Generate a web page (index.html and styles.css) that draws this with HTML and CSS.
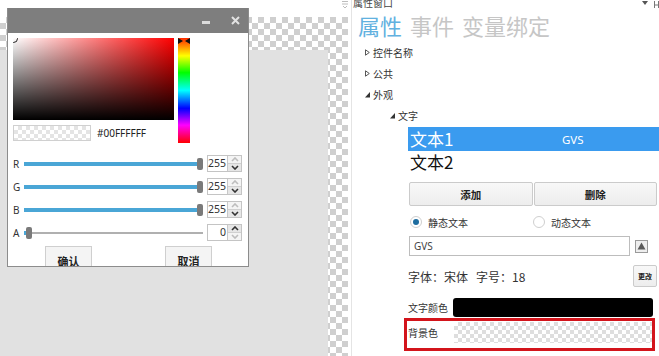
FILE: index.html
```html
<!DOCTYPE html>
<html>
<head>
<meta charset="utf-8">
<link rel="stylesheet" href="styles.css">
</head>
<body>
<div class="canvas">
  <div class="canvas-top"></div>
  <div class="checker"><div class="stage"></div></div>
</div>

<div class="dialog">
  <div class="titlebar">
    <svg class="tb-min" width="8" height="4" viewBox="0 0 8 4"><rect x="0" y="0" width="8" height="3" fill="#dcdcdc"/></svg>
    <svg class="tb-close" width="9" height="9" viewBox="0 0 9 9"><path d="M1 1 L8 8 M8 1 L1 8" stroke="#e2e2e2" stroke-width="2"/></svg>
  </div>
  <div class="dbody">
    <div class="picker">
      <div class="picker-left">
        <div class="sv"><span class="sv-marker"></span></div>
        <div class="preview-row">
          <div class="swatch"></div>
          <span class="hex">#00FFFFFF</span>
        </div>
      </div>
      <div class="hue">
        <svg class="hue-marker" width="12" height="6" viewBox="0 0 12 6"><path d="M0 0 L5 3 L0 6 Z M12 0 L7 3 L12 6 Z" fill="#111"/></svg>
      </div>
    </div>

    <div class="sliders">
      <div class="srow">
        <span class="slabel">R</span>
        <div class="track"><span class="fill"></span><span class="thumb"></span></div>
        <div class="spin"><span class="sval">255</span><span class="arrows"><span class="arr up off"><svg width="8" height="5" viewBox="0 0 8 5"><path d="M1 4 L4 1 L7 4" fill="none" stroke="currentColor" stroke-width="1.6"/></svg></span><span class="arr down"><svg width="8" height="5" viewBox="0 0 8 5"><path d="M1 1 L4 4 L7 1" fill="none" stroke="currentColor" stroke-width="1.6"/></svg></span></span></div>
      </div>
      <div class="srow">
        <span class="slabel">G</span>
        <div class="track"><span class="fill"></span><span class="thumb"></span></div>
        <div class="spin"><span class="sval">255</span><span class="arrows"><span class="arr up off"><svg width="8" height="5" viewBox="0 0 8 5"><path d="M1 4 L4 1 L7 4" fill="none" stroke="currentColor" stroke-width="1.6"/></svg></span><span class="arr down"><svg width="8" height="5" viewBox="0 0 8 5"><path d="M1 1 L4 4 L7 1" fill="none" stroke="currentColor" stroke-width="1.6"/></svg></span></span></div>
      </div>
      <div class="srow">
        <span class="slabel">B</span>
        <div class="track"><span class="fill"></span><span class="thumb"></span></div>
        <div class="spin"><span class="sval">255</span><span class="arrows"><span class="arr up off"><svg width="8" height="5" viewBox="0 0 8 5"><path d="M1 4 L4 1 L7 4" fill="none" stroke="currentColor" stroke-width="1.6"/></svg></span><span class="arr down"><svg width="8" height="5" viewBox="0 0 8 5"><path d="M1 1 L4 4 L7 1" fill="none" stroke="currentColor" stroke-width="1.6"/></svg></span></span></div>
      </div>
      <div class="srow">
        <span class="slabel">A</span>
        <div class="track alpha"><span class="fill"></span><span class="thumb"></span><span class="rest"></span></div>
        <div class="spin"><span class="sval">0</span><span class="arrows"><span class="arr up"><svg width="8" height="5" viewBox="0 0 8 5"><path d="M1 4 L4 1 L7 4" fill="none" stroke="currentColor" stroke-width="1.6"/></svg></span><span class="arr down off"><svg width="8" height="5" viewBox="0 0 8 5"><path d="M1 1 L4 4 L7 1" fill="none" stroke="currentColor" stroke-width="1.6"/></svg></span></span></div>
      </div>
    </div>

    <div class="dbuttons">
      <button class="dbtn">确认</button>
      <button class="dbtn">取消</button>
    </div>
  </div>
</div>

<div class="panel">
  <div class="hdr">
    <svg class="hdr-grip" width="6" height="8" viewBox="0 0 6 8"><path d="M0 1.5 H6 M0 4 H6 M1 6 L3 8 L5 6" stroke="#bdbdbd" stroke-width="1" fill="none"/></svg>
    <span class="hdr-title">属性窗口</span>
    <span class="hdr-right">
      <svg width="6" height="4" viewBox="0 0 6 4"><path d="M0 0 H6 L3 4 Z" fill="#555"/></svg>
      <svg width="5" height="8" viewBox="0 0 5 8"><path d="M0.5 0 V7 M4.5 0 V7 M0.5 4 H4.5" stroke="#777" stroke-width="1" fill="none"/></svg>
    </span>
  </div>

  <div class="tabs">
    <span class="tab active">属性</span>
    <span class="tab">事件</span>
    <span class="tab">变量绑定</span>
  </div>

  <div class="tree">
    <div class="trow lvl1"><svg class="tri" width="5" height="7" viewBox="0 0 5 7"><path d="M0.5 0.8 L4.3 3.5 L0.5 6.2 Z" fill="none" stroke="#444" stroke-width="0.9"/></svg><span>控件名称</span></div>
    <div class="trow lvl1"><svg class="tri" width="5" height="7" viewBox="0 0 5 7"><path d="M0.5 0.8 L4.3 3.5 L0.5 6.2 Z" fill="none" stroke="#444" stroke-width="0.9"/></svg><span>公共</span></div>
    <div class="trow lvl1"><svg class="tri" width="5" height="6" viewBox="0 0 5 6"><path d="M5 0 V5.5 H0 Z" fill="#333"/></svg><span>外观</span></div>
    <div class="trow lvl2"><svg class="tri" width="5" height="6" viewBox="0 0 5 6"><path d="M5 0 V5.5 H0 Z" fill="#333"/></svg><span>文字</span></div>
  </div>

  <div class="section">
    <div class="tlist">
      <div class="titem sel"><span class="tname">文本1</span><span class="tval">GVS</span></div>
      <div class="titem"><span class="tname">文本2</span></div>
    </div>

    <div class="btnrow">
      <button class="pbtn wide">添加</button>
      <button class="pbtn wide">删除</button>
    </div>

    <div class="radiorow">
      <label class="radio on"><span class="rdot"></span>静态文本</label>
      <label class="radio"><span class="rdot"></span>动态文本</label>
    </div>

    <div class="inputrow">
      <div class="tinput">GVS</div>
      <span class="upbtn"><svg width="9" height="8" viewBox="0 0 9 8"><path d="M4.5 0.5 L8.5 7.5 H0.5 Z" fill="#5a5a5a"/></svg></span>
    </div>

    <div class="fontrow">
      <span class="fontinfo">字体：宋体&nbsp;&nbsp;&nbsp;字号：18</span>
      <button class="pbtn small">更改</button>
    </div>

    <div class="colorrow">
      <span class="clabel">文字颜色</span>
      <span class="cbar black"></span>
    </div>

    <div class="colorrow bg-row">
      <span class="clabel">背景色</span>
      <span class="cbar checkbar"></span>
    </div>
  </div>
</div>
</body>
</html>
```

FILE: styles.css
```css
* { box-sizing: border-box; }

body {
  margin: 0;
  width: 659px;
  height: 356px;
  overflow: hidden;
  display: flex;
  background: #fff;
  position: relative;
  font-family: "Noto Sans", "Noto Sans CJK SC", sans-serif;
  color: #222;
}

/* ---------- canvas ---------- */
.canvas {
  width: 348px;
  flex: none;
  display: flex;
  flex-direction: column;
}
.canvas-top { height: 17px; }
.checker {
  flex: 1;
  padding: 33px 20px 0 0;
  background: repeating-conic-gradient(#cfcfcf 0 25%, #fff 0 50%) 0 0 / 12px 12px;
}
.stage { height: 100%; background: #e1e1e1; }

/* ---------- colour dialog ---------- */
.dialog {
  position: absolute;
  left: 7px;
  top: 8px;
  width: 242px;
  height: 259px;
  background: #fff;
  border: 1px solid #8c8c8c;
  border-top: none;
  overflow: hidden;
  display: flex;
  flex-direction: column;
}
.titlebar {
  height: 25px;
  flex: none;
  margin: 0 -1px;
  background: #7e7e7e;
  display: flex;
  align-items: center;
  justify-content: flex-end;
  padding-right: 9px;
  gap: 21px;
}
.tb-min { margin-top: 4px; }

.dbody { padding: 5px 6px 0 5px; }

.picker { display: flex; gap: 4px; }
.picker-left { width: 161px; display: flex; flex-direction: column; }
.sv {
  height: 82px;
  position: relative;
  overflow: hidden;
  background: linear-gradient(to bottom, rgba(0,0,0,0), #000), linear-gradient(to right, #fff, #f00);
}
.sv-marker {
  position: absolute;
  left: -4px;
  top: -4px;
  width: 9px;
  height: 9px;
  border: 1px solid #222;
  border-radius: 50%;
}
.preview-row { display: flex; align-items: center; margin-top: 5px; height: 16px; }
.swatch {
  width: 78px;
  height: 16px;
  border: 1px solid #d0d0d0;
  background: repeating-conic-gradient(#e4e4e4 0 25%, #fff 0 50%) 0 0 / 8px 8px;
}
.hex { margin-left: 6px; font-size: 10px; color: #222; }
.hue {
  width: 12px;
  height: 105px;
  position: relative;
  background: linear-gradient(to bottom, #ff2a00 0%, #ffff00 17%, #00ff00 33%, #00ffff 50%, #0000ff 67%, #ff00ff 83%, #ff0000 100%);
}
.hue-marker { position: absolute; left: 0; top: 0; }

.sliders { margin-top: 9px; }
.srow {
  height: 23px;
  display: grid;
  grid-template-columns: 11px 183px 1fr;
  align-items: center;
}
.slabel { font-size: 10px; color: #333; }
.track { display: flex; align-items: center; height: 12px; margin-right: 4px; }
.track .fill { flex: 1; height: 4px; background: #4aa6d6; }
.track .thumb { width: 6px; height: 12px; background: #7a7a7a; border-radius: 2px; flex: none; }
.track.alpha .fill { flex: none; width: 2px; }
.track.alpha .rest { flex: 1; height: 2px; background: #b0b0b0; }

.spin {
  height: 17px;
  border: 1px solid #c4c4c4;
  display: flex;
  background: #fff;
}
.sval { flex: 1; text-align: right; font-size: 10.5px; line-height: 15px; color: #333; padding-right: 1px; }
.arrows { width: 14px; display: flex; flex-direction: column; border-left: 1px solid #c8c8c8; }
.arr { flex: 1; display: flex; align-items: center; justify-content: center; background: #e6e6e6; color: #333; }
.arr.off { background: #f4f4f4; color: #bdbdbd; }
.arr.up { border-bottom: 1px solid #d0d0d0; }

.dbuttons { display: flex; gap: 73px; padding-left: 32px; margin-top: 2px; }
.dbtn {
  width: 47px;
  height: 29px;
  border: 1px solid #cfcfcf;
  background: #f4f4f4;
  font-family: "Noto Sans CJK SC", sans-serif;
  font-size: 11px;
  font-weight: 700;
  color: #222;
  padding: 0;
}

/* ---------- property panel ---------- */
.panel {
  flex: 1;
  margin-left: 3px;
  border-left: 1px solid #e4e4e4;
  display: flex;
  flex-direction: column;
  font-family: "Noto Sans CJK SC", sans-serif;
  min-width: 0;
}
.hdr {
  height: 9px;
  display: flex;
  align-items: flex-start;
  font-size: 10px;
  line-height: 10px;
  color: #444;
}
.hdr-grip { margin-left: -10px; margin-top: 0; flex: none; }
.hdr-title { margin-left: 5px; margin-top: -2px; }
.hdr-right { margin-left: auto; display: flex; gap: 6px; margin-top: 1px; }

.tabs {
  margin-top: 3px;
  height: 26px;
  line-height: 26px;
  font-size: 22px;
  padding-left: 6px;
  display: flex;
  gap: 8px;
}
.tab { color: #c6c6c6; }
.tab.active { color: #62b1df; }

.tree { margin-top: 4px; }
.trow {
  height: 21px;
  display: flex;
  align-items: center;
  font-size: 10px;
  color: #333;
}
.trow .tri { margin-right: 3px; flex: none; }
.trow.lvl1 { padding-left: 13px; }
.trow.lvl2 { padding-left: 38px; }

.section { padding-left: 56px; display: flex; flex-direction: column; }

.tlist { margin-top: 1px; }
.titem {
  height: 22px;
  display: flex;
  align-items: center;
  padding-left: 2px;
}
.titem.sel { height: 24px; background: #3a9bef; color: #fff; }
.tname { width: 152px; font-size: 17px; line-height: 20px; }
.titem:not(.sel) .tname { color: #111; }
.tval { font-family: "Noto Sans", sans-serif; font-size: 11.5px; }

.btnrow { display: flex; margin-top: 9px; padding-left: 1px; padding-right: 2px; gap: 1px; }
.pbtn {
  border: 1px solid #cbcbcb;
  background: linear-gradient(#f8f8f8, #ededed);
  border-radius: 2px;
  font-family: "Noto Sans CJK SC", sans-serif;
  font-weight: 700;
  color: #222;
  padding: 0;
}
.pbtn.wide { flex: 1; height: 24px; font-size: 10.5px; }

.radiorow { display: flex; margin-top: 6px; height: 20px; align-items: center; padding-left: 2px; }
.radio { display: flex; align-items: center; gap: 6px; font-size: 10px; color: #333; width: 123px; }
.rdot {
  width: 12px;
  height: 12px;
  border-radius: 50%;
  border: 1px solid #cfcfcf;
  background: #fff;
  position: relative;
}
.radio.on .rdot::after {
  content: "";
  position: absolute;
  left: 2px;
  top: 2px;
  width: 6px;
  height: 6px;
  border-radius: 50%;
  background: #1d6c9f;
}

.inputrow { display: flex; align-items: center; margin-top: 4px; padding-left: 1px; gap: 5px; }
.tinput {
  width: 221px;
  height: 20px;
  border: 1px solid #bdbdbd;
  font-family: "Noto Sans", sans-serif;
  font-size: 10px;
  line-height: 18px;
  padding-left: 4px;
  color: #444;
}
.upbtn {
  width: 13px;
  height: 13px;
  border: 1px solid #9a9a9a;
  background: #eee;
  display: flex;
  align-items: center;
  justify-content: center;
}

.fontrow { display: flex; align-items: center; margin-top: 9px; height: 22px; padding-right: 2px; }
.fontinfo { font-size: 12px; color: #333; }
.pbtn.small { margin-left: auto; width: 24px; height: 22px; font-size: 7px; }

.colorrow { display: flex; align-items: center; margin-top: 10px; height: 20px; padding-right: 6px; }
.clabel { font-size: 10px; color: #333; width: 45px; }
.cbar { flex: 1; height: 19px; }
.cbar.black { background: #000; border-radius: 3px; }

.colorrow.bg-row {
  margin-top: 1px;
  margin-left: -4px;
  margin-right: 4px;
  height: 33px;
  border: 3px solid #d3141b;
  padding: 1px 0 0 1px;
  align-items: flex-start;
  padding-right: 0;
}
.bg-row .clabel { width: 46px; line-height: 18px; margin-top: 2px; }
.cbar.checkbar {
  height: 21px;
  margin-right: 0;
  background: repeating-conic-gradient(#dedede 0 25%, #fff 0 50%) 0 0 / 8px 8px;
}
```
